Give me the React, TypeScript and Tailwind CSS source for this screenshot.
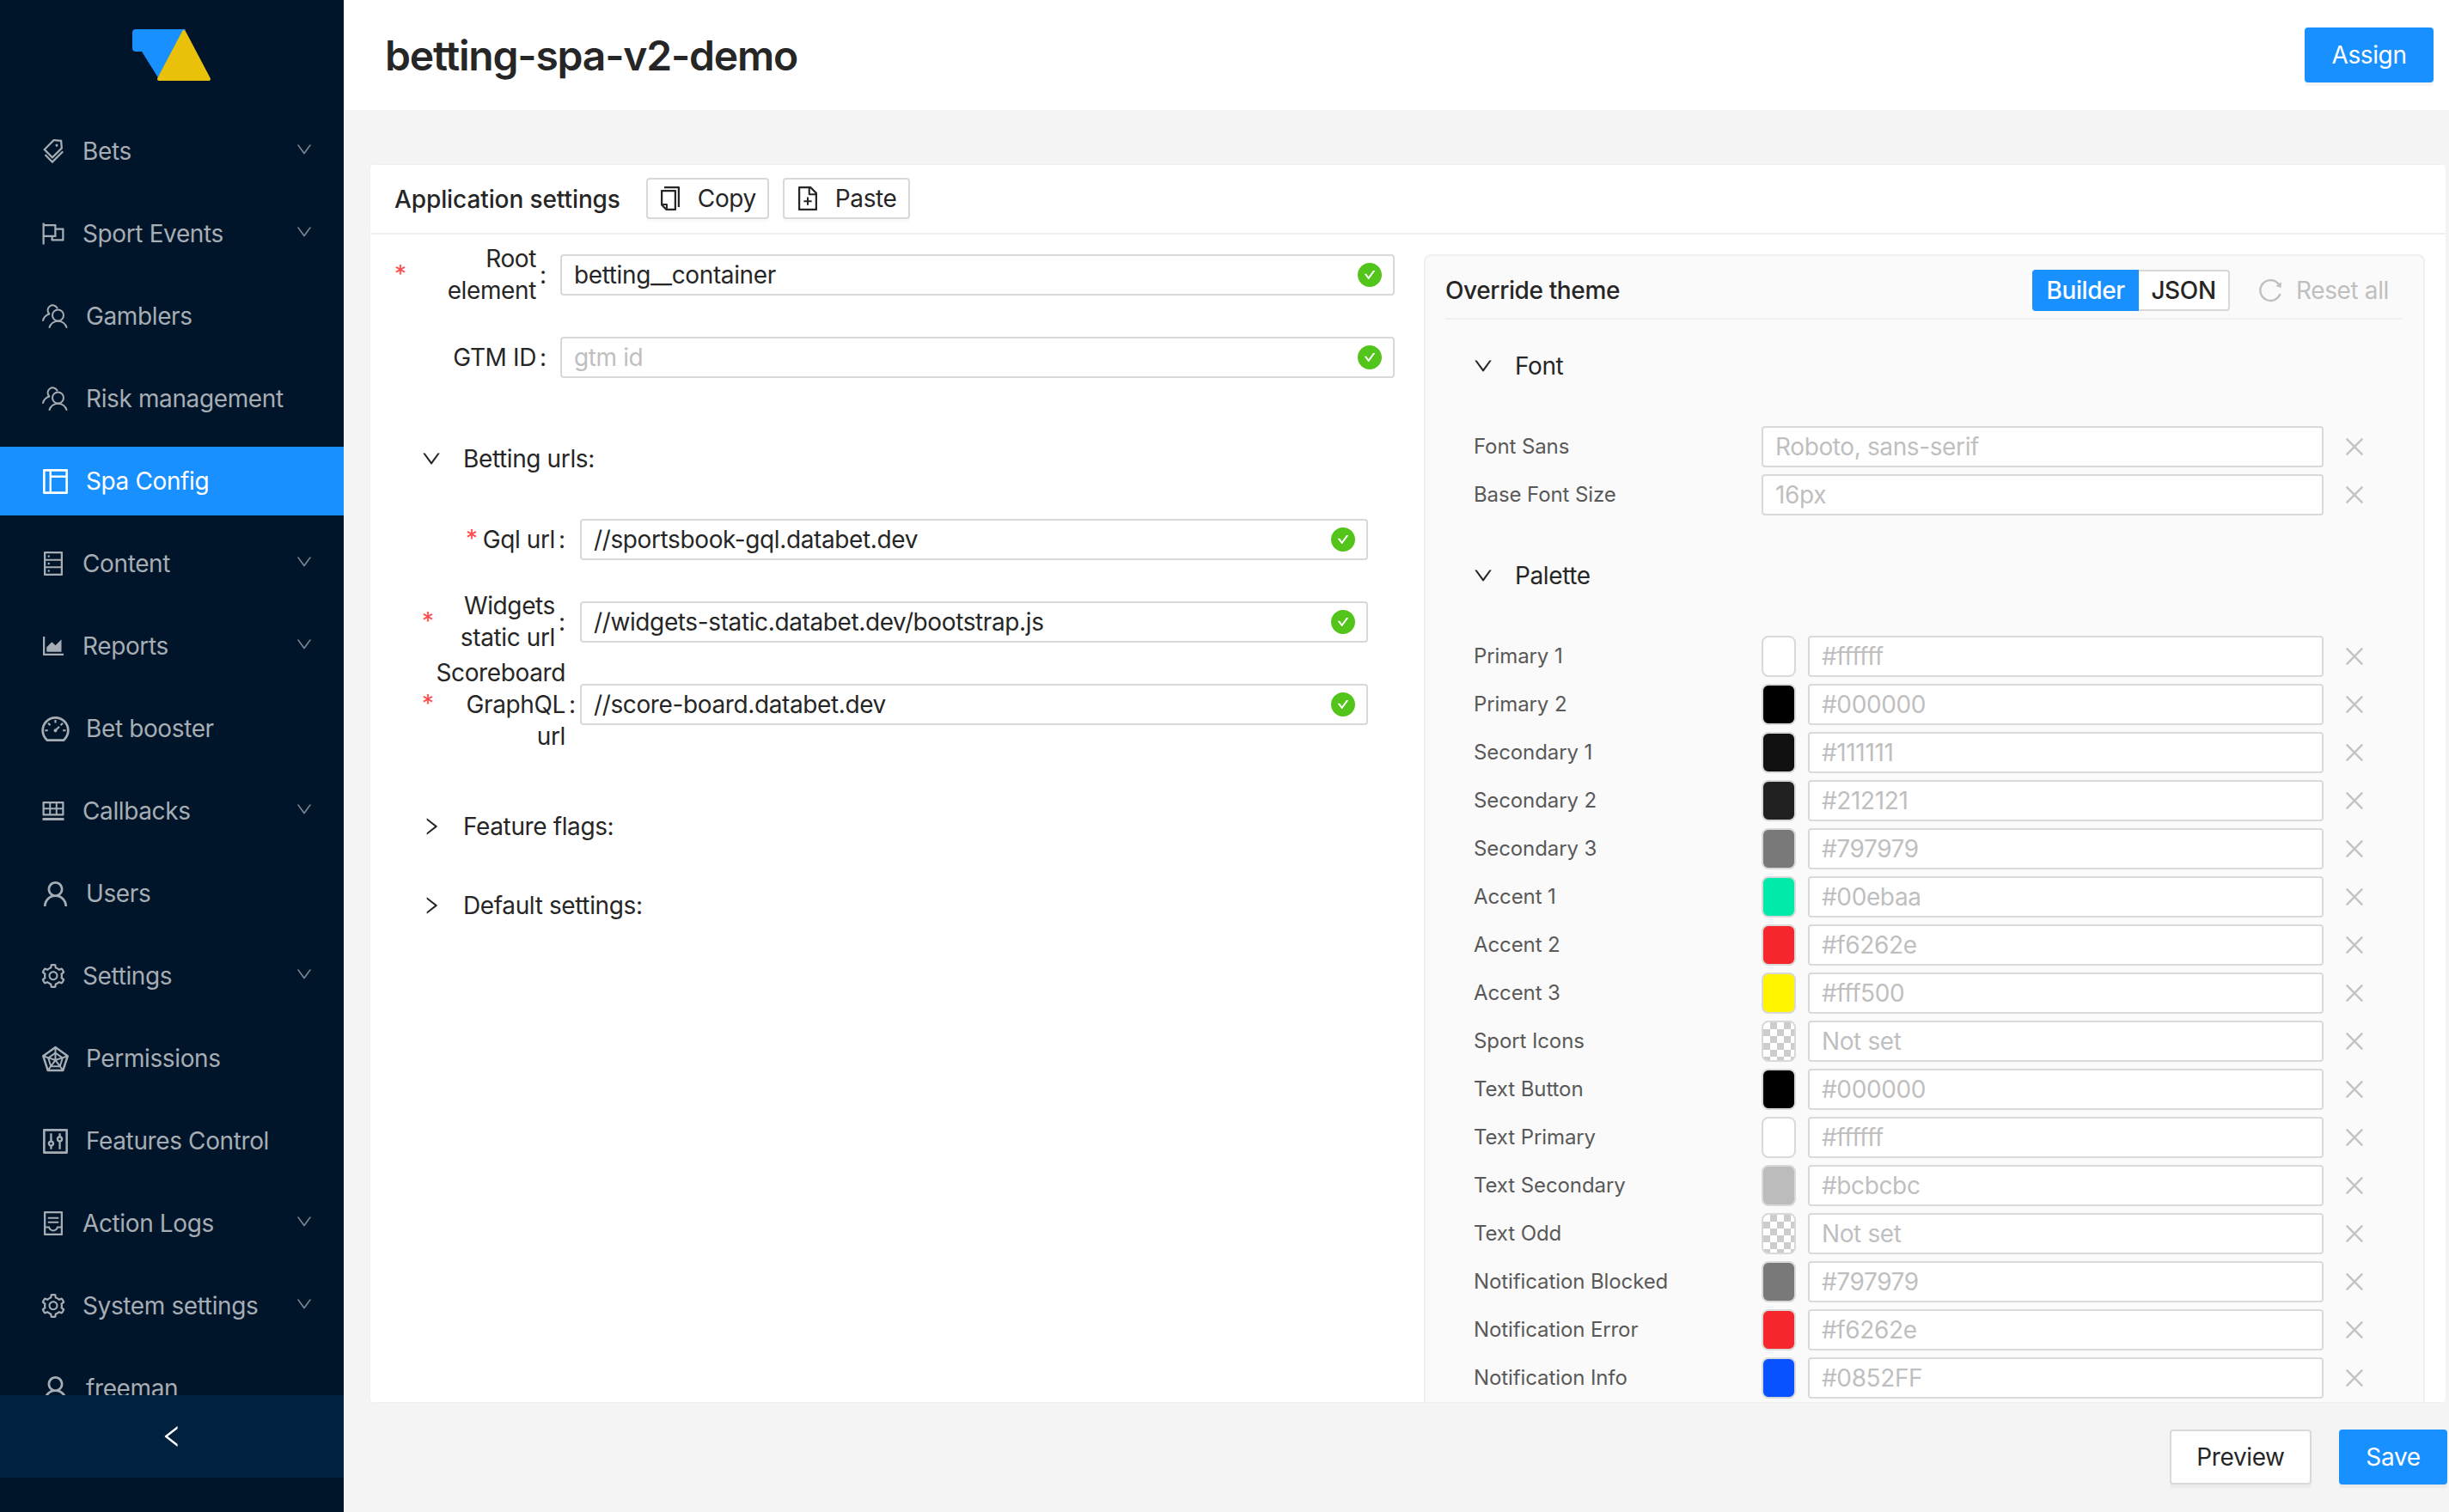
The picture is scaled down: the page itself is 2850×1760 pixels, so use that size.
import React from "react";
import {
  AiOutlineTags, AiOutlineFlag, AiOutlineLayout, AiOutlineDatabase, AiOutlineAreaChart,
  AiOutlineDashboard, AiOutlineInsertRowBelow, AiOutlineUser, AiOutlineSetting, AiOutlineRadarChart,
  AiOutlineControl, AiOutlineContainer, AiOutlineDown, AiOutlineRight, AiOutlineLeft, AiOutlineCopy,
  AiOutlineFileAdd, AiFillCheckCircle, AiOutlineClose, AiOutlineReload,
} from "react-icons/ai";

const Duo = ({ size }: { size?: number }) => (
  <svg width={37} height={37} viewBox="-1.5 -2 37 37" fill="none" stroke="currentColor" strokeWidth="2" strokeLinecap="round">
    <circle cx="20" cy="15" r="6.5" />
    <path d="M10 29a10.5 10.5 0 0 1 20 0" />
    <path d="M19 6.500a5.800 5.800 0 1 0-9.200 6.800" />
    <path d="M9.800 13.500c-3.500 1.200-6.300 3.800-7.300 7.500" />
  </svg>
);

type Item = { label: string; icon: React.ComponentType<{ size?: number }>; sub?: boolean; active?: boolean };

const items: Item[] = [
  { label: "Bets", icon: AiOutlineTags, sub: true },
  { label: "Sport Events", icon: AiOutlineFlag, sub: true },
  { label: "Gamblers", icon: Duo },
  { label: "Risk management", icon: Duo },
  { label: "Spa Config", icon: AiOutlineLayout, active: true },
  { label: "Content", icon: AiOutlineDatabase, sub: true },
  { label: "Reports", icon: AiOutlineAreaChart, sub: true },
  { label: "Bet booster", icon: AiOutlineDashboard },
  { label: "Callbacks", icon: AiOutlineInsertRowBelow, sub: true },
  { label: "Users", icon: AiOutlineUser },
  { label: "Settings", icon: AiOutlineSetting, sub: true },
  { label: "Permissions", icon: AiOutlineRadarChart },
  { label: "Features Control", icon: AiOutlineControl },
  { label: "Action Logs", icon: AiOutlineContainer, sub: true },
  { label: "System settings", icon: AiOutlineSetting, sub: true },
  { label: "freeman", icon: AiOutlineUser },
];

const NavItem = ({ item }: { item: Item }) => {
  const Icon = item.icon;
  return (
    <div
      className={`flex items-center h-[80px] mb-[16px] shrink-0 text-[28px] pl-[46px] ${
        item.active ? "bg-[#1890ff] text-white" : "text-[#a6adb4]"
      } ${item.sub ? "gap-[18px]" : "gap-[17px]"}`}
    >
      <Icon size={item.sub ? 32 : 37} />
      <span>{item.label}</span>
      {item.sub && (
        <span className="ml-auto mr-[35px] -mt-[4px] text-[#77818c]">
          <AiOutlineDown size={22} />
        </span>
      )}
    </div>
  );
};

const Sidebar = () => (
  <aside className="w-[400px] shrink-0 h-full flex flex-col bg-[#001529]">
    <div className="h-[128px] shrink-0 flex items-center justify-center">
      <svg width="92" height="60" viewBox="0 0 92 60">
        <path
          d="M4 0H62L30 56.500L11 26H4a4 4 0 0 1-4-4V4a4 4 0 0 1 4-4z"
          fill="#1890ff"
        />
        <path d="M60 3L89 58H31Z" fill="#eac10a" stroke="#eac10a" strokeWidth="4" strokeLinejoin="round" />
      </svg>
    </div>
    <nav className="flex-1 min-h-0 overflow-hidden pt-[8px] flex flex-col">
      {items.map((it) => (
        <NavItem key={it.label} item={it} />
      ))}
    </nav>
    <div className="h-[96px] shrink-0 bg-[#002140] flex items-center justify-center text-white">
      <AiOutlineLeft size={32} />
    </div>
    <div className="h-[40px] shrink-0" />
  </aside>
);

const TextInput = ({ value, placeholder, ok, width }: { value?: string; placeholder?: string; ok?: boolean; width: string }) => (
  <div className={`${width} h-[48px] shrink-0 flex items-center justify-between bg-white border-2 border-[#d9d9d9] rounded-[4px] pl-[14px] pr-[11px] text-[28px]`}>
    <span className={value ? "text-[#262626]" : "text-[#bfbfbf]"}>{value ?? placeholder}</span>
    {ok && (
      <span className="text-[#52c41a]">
        <AiFillCheckCircle size={32} />
      </span>
    )}
  </div>
);

const Star = () => <span className="text-[#ff4d4f] text-[28px] leading-[37px] shrink-0 -mt-[2px]">*</span>;

const FormRow = ({
  lines, required, box, colonPr, value, placeholder, input,
}: {
  lines: string[]; required?: boolean; box: string; colonPr: string; value?: string; placeholder?: string; input: string;
}) => (
  <div className="flex items-center h-[48px]">
    <div className={`${box} ${colonPr} shrink-0 flex items-center justify-end text-[28px] leading-[37px] text-[#262626]`}>
      {required && <Star />}
      <div className={lines.length > 1 ? "flex-1 text-right whitespace-nowrap" : "ml-[6px] text-right whitespace-nowrap"}>
        {lines.map((l) => (
          <div key={l}>{l}</div>
        ))}
      </div>
      <span className="ml-[4px] w-[8px]">:</span>
    </div>
    <TextInput value={value} placeholder={placeholder} ok width={input} />
  </div>
);

const Section = ({ label, open, className }: { label: string; open?: boolean; className: string }) => (
  <div className={`flex items-center h-[48px] pl-[58px] gap-[24px] text-[28px] text-[#262626] ${className}`}>
    {open ? <AiOutlineDown size={26} /> : <AiOutlineRight size={26} />}
    <span>{label}</span>
  </div>
);

const LeftForm = () => (
  <div className="w-[1226px] shrink-0 pt-[23px]">
    <div className="pl-[28px]">
      <div className="mb-[48px]">
        <FormRow lines={["Root", "element"]} required box="w-[193px]" colonPr="pr-[16px]" value="betting__container" input="w-[971px]" />
      </div>
      <FormRow lines={["GTM ID"]} box="w-[193px]" colonPr="pr-[16px]" placeholder="gtm id" input="w-[971px]" />
    </div>
    <Section label="Betting urls:" open className="mt-[70px]" />
    <div className="pl-[60px] mt-[46px]">
      <div className="mb-[48px]">
        <FormRow lines={["Gql url"]} required box="w-[184px]" colonPr="pr-[17px]" value="//sportsbook-gql.databet.dev" input="w-[917px]" />
      </div>
      <div className="mb-[48px]">
        <FormRow lines={["Widgets", "static url"]} required box="w-[184px]" colonPr="pr-[17px]" value="//widgets-static.databet.dev/bootstrap.js" input="w-[917px]" />
      </div>
      <FormRow lines={["Scoreboard", "GraphQL", "url"]} required box="w-[184px]" colonPr="pr-[5px]" value="//score-board.databet.dev" input="w-[917px]" />
    </div>
    <Section label="Feature flags:" className="mt-[94px]" />
    <Section label="Default settings:" className="mt-[44px]" />
  </div>
);

const Clear = () => (
  <span className="ml-[21px] text-[#c4c4c4]">
    <AiOutlineClose size={30} />
  </span>
);

const FieldLabel = ({ children }: { children: string }) => (
  <div className="w-[368px] pl-[33px] shrink-0 text-[24px] tracking-[-0.1px] text-[#595959] whitespace-nowrap">{children}</div>
);

const PlainRow = ({ label, placeholder }: { label: string; placeholder: string }) => (
  <div className="flex items-center h-[48px] mb-[8px]">
    <FieldLabel>{label}</FieldLabel>
    <TextInput placeholder={placeholder} width="w-[654px]" />
    <Clear />
  </div>
);

const palette: { label: string; value: string; bg?: string }[] = [
  { label: "Primary 1", value: "#ffffff", bg: "bg-[#ffffff]" },
  { label: "Primary 2", value: "#000000", bg: "bg-[#000000]" },
  { label: "Secondary 1", value: "#111111", bg: "bg-[#111111]" },
  { label: "Secondary 2", value: "#212121", bg: "bg-[#212121]" },
  { label: "Secondary 3", value: "#797979", bg: "bg-[#797979]" },
  { label: "Accent 1", value: "#00ebaa", bg: "bg-[#00ebaa]" },
  { label: "Accent 2", value: "#f6262e", bg: "bg-[#f6262e]" },
  { label: "Accent 3", value: "#fff500", bg: "bg-[#fff500]" },
  { label: "Sport Icons", value: "Not set" },
  { label: "Text Button", value: "#000000", bg: "bg-[#000000]" },
  { label: "Text Primary", value: "#ffffff", bg: "bg-[#ffffff]" },
  { label: "Text Secondary", value: "#bcbcbc", bg: "bg-[#bcbcbc]" },
  { label: "Text Odd", value: "Not set" },
  { label: "Notification Blocked", value: "#797979", bg: "bg-[#797979]" },
  { label: "Notification Error", value: "#f6262e", bg: "bg-[#f6262e]" },
  { label: "Notification Info", value: "#0852FF", bg: "bg-[#0852ff]" },
];

const ColorRow = ({ label, value, bg }: { label: string; value: string; bg?: string }) => (
  <div className="flex items-center h-[48px] mb-[8px]">
    <FieldLabel>{label}</FieldLabel>
    <div
      className={`w-[40px] h-[48px] shrink-0 rounded-[8px] border-2 border-[#d9d9d9] mr-[14px] ${
        bg ?? "bg-[repeating-conic-gradient(#cccccc_0_25%,#ffffff_0_50%)] bg-[length:16px_16px]"
      }`}
    />
    <TextInput placeholder={value} width="w-[600px]" />
    <Clear />
  </div>
);

const ThemeHeading = ({ label, className }: { label: string; className: string }) => (
  <div className={`flex items-center h-[48px] pl-[31px] gap-[24px] text-[28px] text-[#262626] ${className}`}>
    <AiOutlineDown size={26} />
    <span>{label}</span>
  </div>
);

const ThemePanel = () => (
  <div className="w-[1165px] shrink-0 mt-[23px] h-[1400px] bg-[#fafafa] border-2 border-[#f0f0f0] rounded-t-[8px] pt-[16px] pl-[23px] pr-[24px]">
    <div className="flex items-center h-[48px] mb-[8px]">
      <span className="text-[28px] font-medium text-[#262626]">Override theme</span>
      <div className="ml-auto flex h-[48px] text-[28px] font-medium">
        <span className="w-[124px] bg-[#1890ff] text-white rounded-l-[4px] flex items-center justify-center">Builder</span>
        <span className="w-[106px] bg-white text-[#262626] border-2 border-l-0 border-[#d9d9d9] rounded-r-[4px] flex items-center justify-center">JSON</span>
      </div>
      <div className="ml-[31px] mr-[16px] flex items-center gap-[14px] text-[28px] text-[#bfbfbf]">
        <AiOutlineReload size={32} />
        <span>Reset all</span>
      </div>
    </div>
    <div className="h-[2px] bg-[#f0f0f0]" />
    <ThemeHeading label="Font" className="mt-[30px] mb-[46px]" />
    <PlainRow label="Font Sans" placeholder="Roboto, sans-serif" />
    <PlainRow label="Base Font Size" placeholder="16px" />
    <ThemeHeading label="Palette" className="mt-[46px] mb-[46px]" />
    {palette.map((p) => (
      <ColorRow key={p.label} {...p} />
    ))}
  </div>
);

const OutlineButton = ({ icon, label, width, pl }: { icon: React.ReactNode; label: string; width: string; pl: string }) => (
  <div className={`${width} ${pl} h-[48px] flex items-center gap-[16px] bg-white border-2 border-[#d9d9d9] rounded-[4px] text-[28px] text-[#262626] shadow-[0_4px_0_rgba(0,0,0,0.015)]`}>
    {icon}
    <span>{label}</span>
  </div>
);

export default function App() {
  return (
    <div className="w-[2850px] h-[1760px] flex overflow-hidden bg-[#f4f4f4] font-['Inter',sans-serif] tracking-[-0.38px]">
      <Sidebar />
      <main className="flex-1 min-w-0 flex flex-col">
        <header className="h-[128px] shrink-0 bg-white flex items-center justify-between pl-[48px] pr-[18px]">
          <h1 className="text-[48px] font-semibold tracking-[-1.2px] text-[#262626] mt-[2px]">betting-spa-v2-demo</h1>
          <div className="w-[150px] h-[64px] flex items-center justify-center bg-[#1890ff] text-white text-[28px] rounded-[4px] shadow-[0_4px_0_rgba(0,0,0,0.04)]">
            Assign
          </div>
        </header>
        <section className="flex-1 min-h-0 pt-[64px] pl-[31px]">
          <div className="w-[2415px] h-[1440px] bg-white rounded-[4px] shadow-[0_0_0_1px_#f0f0f0] overflow-hidden">
            <div className="h-[81px] border-b-2 border-[#f0f0f0] flex items-center pl-[28px]">
              <span className="text-[28px] font-medium tracking-[-0.1px] text-[#262626] mr-[30px]">Application settings</span>
              <div className="flex gap-[16px] mt-[-2px]">
                <OutlineButton icon={<AiOutlineCopy size={32} />} label="Copy" width="w-[143px]" pl="pl-[10px]" />
                <OutlineButton icon={<AiOutlineFileAdd size={32} />} label="Paste" width="w-[148px]" pl="pl-[11px]" />
              </div>
            </div>
            <div className="flex">
              <LeftForm />
              <ThemePanel />
            </div>
          </div>
        </section>
        <footer className="h-[128px] shrink-0 flex justify-end items-start gap-[32px] pt-[32px] pr-[2px]">
          <div className="w-[165px] h-[64px] flex items-center justify-center bg-white border-2 border-[#d9d9d9] rounded-[4px] text-[28px] text-[#262626] shadow-[0_4px_0_rgba(0,0,0,0.03)]">
            Preview
          </div>
          <div className="w-[126px] h-[64px] flex items-center justify-center bg-[#1890ff] text-white text-[28px] rounded-[4px] shadow-[0_4px_0_rgba(0,0,0,0.04)]">
            Save
          </div>
        </footer>
      </main>
    </div>
  );
}
